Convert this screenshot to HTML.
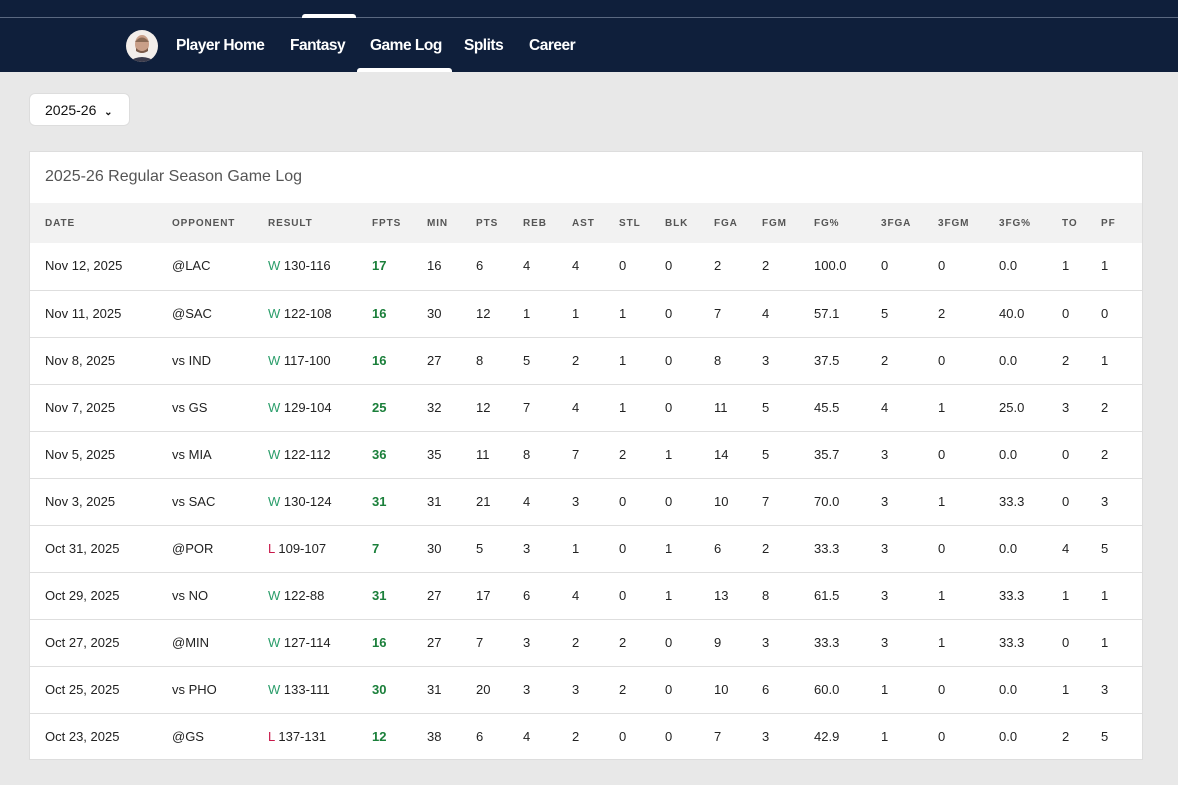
<!DOCTYPE html>
<html><head><meta charset="utf-8"><style>
*{margin:0;padding:0;box-sizing:border-box}
body{width:1178px;height:785px;background:#e8e8e8;font-family:"Liberation Sans",sans-serif;position:relative;overflow:hidden;color:#222}
.nav{position:absolute;left:0;top:0;width:1178px;height:72px;background:#0f1f3b}
.line{position:absolute;left:0;top:17px;width:1178px;height:1px;background:#5a6880}
.toptab{position:absolute;left:302px;top:14px;width:54px;height:4px;background:#fff;border-radius:3px 3px 0 0}
.av{position:absolute;left:126px;top:30px;width:32px;height:32px;border-radius:50%;background:#f3eeea;overflow:hidden}
.nl{position:absolute;top:37px;color:#fff;font-weight:bold;font-size:15.5px;letter-spacing:-0.5px}
.ul{position:absolute;left:357px;top:68px;width:95px;height:4px;background:#fff;border-radius:3px 3px 0 0}
.dd{position:absolute;left:29px;top:93px;width:101px;height:33px;background:#fff;border-radius:6px;border:1px solid #ddd;font-size:14px;padding:8px 0 0 15px;color:#111}
.card{position:absolute;left:29px;top:151px;width:1114px;height:609px;background:#fff;border:1px solid #ddd}
.title{position:absolute;left:15px;top:16px;font-size:16px;color:#555}
.hdr{position:absolute;left:0;top:51px;width:1112px;height:40px;background:#f2f2f2}
.row{position:absolute;left:0;width:1112px;height:47px;border-top:1px solid #dedede}
.c{position:absolute;font-size:13px;color:#222;white-space:nowrap}
.hdr .c{top:15px;font-size:10px;font-weight:bold;letter-spacing:0.9px;color:#555}
.row .c{top:15px}
.w{color:#2a9d6a}.l{color:#c8184a}.f{color:#1a7f3a;font-weight:bold}
</style></head><body>
<div class="nav"><div class="line"></div><div class="toptab"></div>
<div class="av"><svg width="32" height="32"><ellipse cx="16" cy="14" rx="7" ry="9" fill="#c99f88"/><path d="M9 12q7-9 14 0" fill="#8a6a55"/><path d="M10 18q6 6 12 0v3q-6 4-12 0z" fill="#7a5a48"/><path d="M2 32q14-10 28 0z" fill="#3b3b4b"/></svg></div>
<div class="nl" style="left:176px">Player Home</div>
<div class="nl" style="left:290px">Fantasy</div>
<div class="nl" style="left:370px">Game Log</div>
<div class="nl" style="left:464px">Splits</div>
<div class="nl" style="left:529px">Career</div>
<div class="ul"></div></div>
<div class="dd">2025-26 &nbsp;<span style="font-size:10px;font-weight:bold">&#8964;</span></div>
<div class="card">
<div class="title">2025-26 Regular Season Game Log</div>
<div class="hdr" id="h"></div>
<div id="rows"></div>
</div>
<script>
var X=[15,142,238,342,397,446,493,542,589,635,684,732,784,851,908,969,1032,1071];
var H=["DATE","OPPONENT","RESULT","FPTS","MIN","PTS","REB","AST","STL","BLK","FGA","FGM","FG%","3FGA","3FGM","3FG%","TO","PF"];
var R=[
["Nov 12, 2025","@LAC","W","130-116","17","16","6","4","4","0","0","2","2","100.0","0","0","0.0","1","1"],
["Nov 11, 2025","@SAC","W","122-108","16","30","12","1","1","1","0","7","4","57.1","5","2","40.0","0","0"],
["Nov 8, 2025","vs IND","W","117-100","16","27","8","5","2","1","0","8","3","37.5","2","0","0.0","2","1"],
["Nov 7, 2025","vs GS","W","129-104","25","32","12","7","4","1","0","11","5","45.5","4","1","25.0","3","2"],
["Nov 5, 2025","vs MIA","W","122-112","36","35","11","8","7","2","1","14","5","35.7","3","0","0.0","0","2"],
["Nov 3, 2025","vs SAC","W","130-124","31","31","21","4","3","0","0","10","7","70.0","3","1","33.3","0","3"],
["Oct 31, 2025","@POR","L","109-107","7","30","5","3","1","0","1","6","2","33.3","3","0","0.0","4","5"],
["Oct 29, 2025","vs NO","W","122-88","31","27","17","6","4","0","1","13","8","61.5","3","1","33.3","1","1"],
["Oct 27, 2025","@MIN","W","127-114","16","27","7","3","2","2","0","9","3","33.3","3","1","33.3","0","1"],
["Oct 25, 2025","vs PHO","W","133-111","30","31","20","3","3","2","0","10","6","60.0","1","0","0.0","1","3"],
["Oct 23, 2025","@GS","L","137-131","12","38","6","4","2","0","0","7","3","42.9","1","0","0.0","2","5"]];
var h="";H.forEach(function(t,i){h+='<span class="c" style="left:'+X[i]+'px">'+t+'</span>'});
document.getElementById("h").innerHTML=h;
var s="";R.forEach(function(r,k){s+='<div class="row" style="top:'+(91+k*47)+'px;'+(k==0?'border-top:none':'')+'">';
s+='<span class="c" style="left:15px">'+r[0]+'</span><span class="c" style="left:142px">'+r[1]+'</span>';
s+='<span class="c" style="left:238px"><span class="'+(r[2]=="W"?"w":"l")+'">'+r[2]+'</span> '+r[3]+'</span>';
s+='<span class="c f" style="left:342px">'+r[4]+'</span>';
for(var i=5;i<r.length;i++)s+='<span class="c" style="left:'+X[i-1]+'px">'+r[i]+'</span>';
s+='</div>'});
document.getElementById("rows").innerHTML=s;
</script>
</body></html>
